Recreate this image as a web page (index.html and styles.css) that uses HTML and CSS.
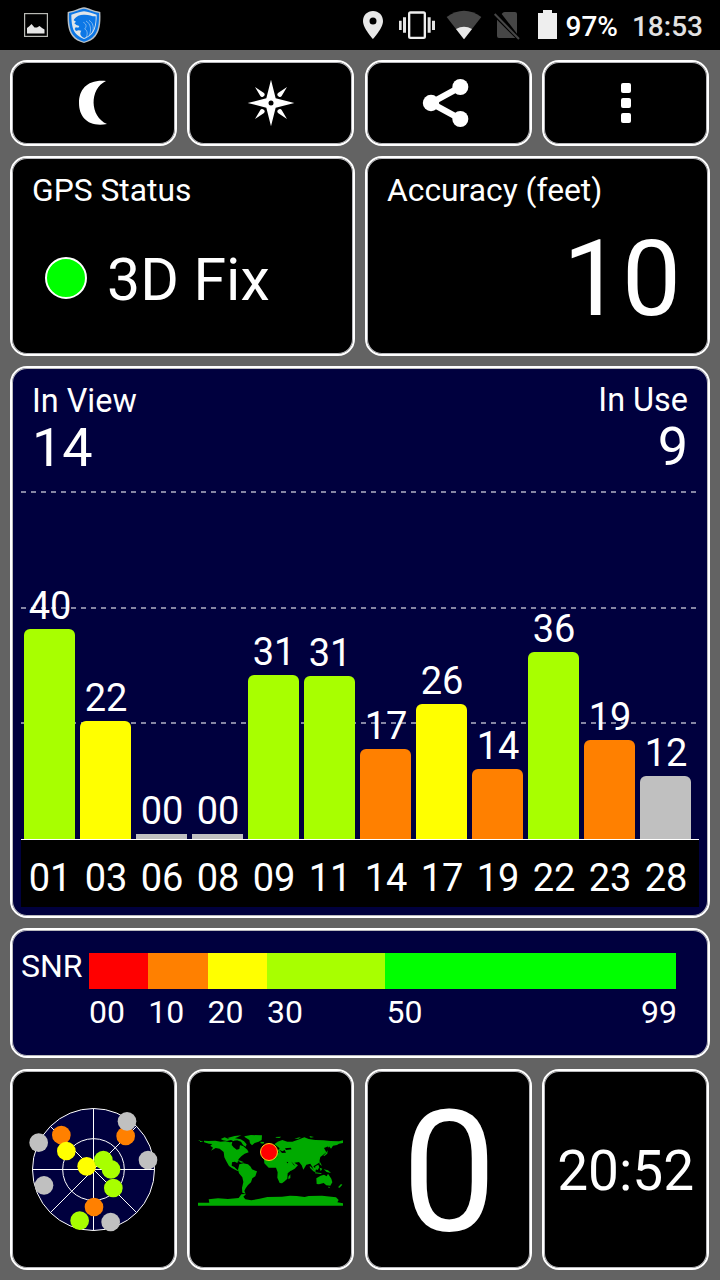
FILE: index.html
```html
<!DOCTYPE html>
<html lang="en">
<head>
  <meta charset="UTF-8" />
  <meta name="viewport" content="width=device-width, initial-scale=1.0"/>
  <title>GPS Status</title>
  <link rel="stylesheet" href="styles.css">
</head>
<body>
  <header class="statusbar">
    <svg class="notif" width="24" height="24" viewBox="0 0 24 24">
      <rect x=".6" y=".6" width="22.8" height="22.8" fill="none" stroke="#b9bab5" stroke-width="1.2"/>
      <path d="M3 20.500V15l2-1.500L7.500 11l3 3.500h2.500l2.500-1.500 2.500 2 2.500 1.500v4z" fill="#e6e6e6"/>
    </svg>
    <svg class="shield" width="34" height="36" viewBox="0 0 102 108">
      <path d="M51 1C37 2 27 11 2 15c-2 38 3 58 14 73 9 11 19 16 35 20 16-4 26-9 35-20 11-15 16-35 14-73C75 11 65 2 51 1z" fill="#b9c0c6"/>
      <path d="M51 5C38 7 27 14 6 18c-1 33 3 52 13 66 8 10 17 15 32 20 15-5 24-10 32-20 10-14 14-33 13-66C75 14 64 7 51 5z" fill="#0c77e6"/>
      <path d="M51 13C39 14 28 19 13 23c0 26 4 44 12 55 6 8 14 13 26 18 12-5 20-10 26-18 8-11 12-29 12-55C74 19 63 14 51 13z" fill="#dfe5ea"/>
      <path d="M22 36c6-9 17-13 28-13 16-1 26 6 36 5 1 22-4 39-12 49-6 7-12 12-22 16-12-5-15-13-9-22l-8-1-8 2-4-6 3-5 8 1 3-5-9-3-6-5 5-5-7-4z" fill="#0c77e6"/>
      <path d="M49 46c10 5 10 14 4 20 9 4 10 17 3 28M57 42c14 8 17 25 10 44M66 40c12 7 15 19 11 36" fill="none" stroke="#b4d4f5" stroke-width="2"/>
    </svg>

    <div class="indicators">
      <svg width="20" height="30" viewBox="42 30 60 90">
        <path d="M72 33c-17 0-30 13-30 30 0 22 30 54 30 54s30-32 30-54c0-17-13-30-30-30zm0 19.500a10.500 10.500 0 1 1 0 21 10.500 10.500 0 0 1 0-21z" fill="#e8e8e8"/>
      </svg>
      <svg class="vibrate" width="36" height="30" viewBox="150 30 108 90">
        <rect x="180.500" y="37.500" width="47" height="76" rx="4" fill="none" stroke="#eee" stroke-width="7"/>
        <path d="M150 62h8v28h-8zM162 52h9v46h-9zM236 52h9v46h-9zM249 62h9v28h-9z" fill="#e4e4e4"/>
      </svg>
      <svg class="wifi" width="36" height="30" viewBox="291 30 108 90">
        <path d="M293 51q52-37 104 0L345 118z" fill="#464646"/>
        <path d="M321 87q24-13 48 0L345 118z" fill="#e8e8e8"/>
      </svg>
      <svg class="sim" width="27" height="30" viewBox="432 30 81 90">
        <path d="M458 42q4-6 9-6h31q6 0 6 6v59zM444 59l55 55h-49q-6 0-6-6z" fill="#464646"/>
        <path d="M437 42l73 75" stroke="#464646" stroke-width="6"/>
      </svg>
      <svg class="battery" width="19" height="30" viewBox="567 30 57 90">
        <path d="M582 30h27v9h15v78h-57V39h15z" fill="#eee"/>
      </svg>
      <span class="percent">97%</span>
      <span class="clock">18:53</span>
    </div>
  </header>

  <main class="screen">
    <div class="row">
      <button class="panel tool" aria-label="Night mode">
        <svg width="161" height="80" viewBox="39 189 483 240">
          <path d="M318 243C262 238 237 268 237 309c0 43 28 73 84 63-52-22-54-105-3-129z" fill="#fff"/>
        </svg>
      </button>
      <button class="panel tool" aria-label="Compass">
        <svg width="161" height="80" viewBox="30 39 483 240">
          <path d="M273 89l14 56 56 14-56 14-14 56-14-56-56-14 56-14z" fill="#fff"/>
          <path d="M225 111l27 18q4 3 1 8l-4 3q-5 2-8-2zM321 111l-27 18q-4 3-1 8l4 3q5 2 8-2zM225 207l27-18q4-3 1-8l-4-3q-5-2-8 2zM321 207l-27-18q-4-3-1-8l4-3q5-2 8 2z" fill="#fff"/>
          <circle cx="273" cy="159" r="7.500" fill="#000"/>
        </svg>
      </button>
      <button class="panel tool" aria-label="Share">
        <svg width="161" height="80" viewBox="564 39 483 240">
          <path d="M841 111l-88 48 88 48" fill="none" stroke="#fff" stroke-width="19"/>
          <circle cx="841" cy="111" r="24" fill="#fff"/>
          <circle cx="753" cy="159" r="24.500" fill="#fff"/>
          <circle cx="841" cy="207" r="24" fill="#fff"/>
        </svg>
      </button>
      <button class="panel tool" aria-label="Menu">
        <span class="menu-dots"><i></i><i></i><i></i></span>
      </button>
    </div>

    <div class="row row-status">
      <section class="panel">
        <h2>GPS Status</h2>
        <div class="fix"><span class="led"></span>3D Fix</div>
      </section>
      <section class="panel">
        <h2>Accuracy (feet)</h2>
        <div class="accuracy">10</div>
      </section>
    </div>

    <section class="panel navy chart">
      <div class="counts">
        <div><h2>In View</h2><strong>14</strong></div>
        <div class="in-use"><h2>In Use</h2><strong>9</strong></div>
      </div>
      <div class="plot">
        <div class="sat"><span>40</span><div class="bar lime" style="height:210px"></div></div>
        <div class="sat"><span>22</span><div class="bar yellow" style="height:118px"></div></div>
        <div class="sat"><span>00</span><div class="bar gray flat" style="height:5px"></div></div>
        <div class="sat"><span>00</span><div class="bar gray flat" style="height:5px"></div></div>
        <div class="sat"><span>31</span><div class="bar lime" style="height:164px"></div></div>
        <div class="sat"><span>31</span><div class="bar lime" style="height:163px"></div></div>
        <div class="sat"><span>17</span><div class="bar orange" style="height:90px"></div></div>
        <div class="sat"><span>26</span><div class="bar yellow" style="height:135px"></div></div>
        <div class="sat"><span>14</span><div class="bar orange" style="height:70px"></div></div>
        <div class="sat"><span>36</span><div class="bar lime" style="height:187px"></div></div>
        <div class="sat"><span>19</span><div class="bar orange" style="height:99px"></div></div>
        <div class="sat"><span>12</span><div class="bar gray" style="height:63px"></div></div>
      </div>
      <div class="ids">
        <span>01</span><span>03</span><span>06</span><span>08</span><span>09</span><span>11</span>
        <span>14</span><span>17</span><span>19</span><span>22</span><span>23</span><span>28</span>
      </div>
    </section>

    <section class="panel navy snr">
      <span class="snr-title">SNR</span>
      <div class="scale">
        <div class="w10"><div class="swatch red"></div>00</div>
        <div class="w10"><div class="swatch orange"></div>10</div>
        <div class="w10"><div class="swatch yellow"></div>20</div>
        <div class="w20"><div class="swatch lime"></div>30</div>
        <div class="w49"><div class="swatch green"></div><div class="ends"><span>50</span><span>99</span></div></div>
      </div>
    </section>

    <div class="row row-bottom">
      <section class="panel">
        <svg width="161" height="195" viewBox="39 21 483 585">
          <g fill="#00003e" stroke="#fff" stroke-width="3">
            <circle cx="280.500" cy="313.500" r="183"/>
            <circle cx="280.500" cy="313.500" r="92.500" fill="none"/>
            <path d="M280.500 130v367M97 313.500h367M151 184l259 259M410 184L151 443" fill="none"/>
          </g>
          <g fill="#ff8000">
            <circle cx="377" cy="213" r="28"/>
            <circle cx="184" cy="210" r="28"/>
            <circle cx="282" cy="426" r="28"/>
          </g>
          <g fill="#c0c0c0">
            <circle cx="381" cy="169" r="28"/>
            <circle cx="116" cy="233" r="28"/>
            <circle cx="444" cy="285" r="28"/>
            <circle cx="132" cy="361" r="28"/>
            <circle cx="332" cy="471" r="28"/>
          </g>
          <g fill="#ff0">
            <circle cx="199" cy="258" r="28"/>
            <circle cx="260" cy="304" r="28"/>
          </g>
          <g fill="#a8ff00">
            <circle cx="310" cy="285" r="28"/>
            <circle cx="333" cy="313" r="28"/>
            <circle cx="340" cy="369" r="28"/>
            <circle cx="239" cy="467" r="28"/>
          </g>
        </svg>
      </section>
      <section class="panel">
        <svg width="161" height="195" viewBox="0 -144 483 585">
          <g fill="#00aa00">
            <!-- americas -->
            <path d="M24 60h6v6h12v-4l14 1 20-1 16 3 14-1 14 3 10-2 6 8-6 8 10 8 8-2 2-12 10 4 12 10 4 8-12 4-10 8-8 8-4 12-8-4-8 2-1 10 8 4 6 6 8 6-6-1-14-7-10-7-8-14-6-12-2-16-12-10-12-2-14 8 6-9-8-6 6-5-10-1-10-3z"/>
            <path d="M148 133l12-3 14 3 8 7 4 8 15 6-5 15-9 6-4 12-9 8-7 10-4 8 4 8-10-3-1-14 4-18-3-14-10-12-3-11z"/>
            <path d="M92 57l12-5 10 4 8-3 14 2 16 3 10 6 8 9-3 7-8-5-6-10-12-4-10 3-8-4-12 3-12-2zM112 54l22-6 20-2-12 6-12 4z"/>
            <path d="M163 49l20-4 33 1-1 14-9 5-12 4-8 7-6-6-2-10-13-8zM211 65l12 1-3 5-8-1z"/>
            <path d="M138 120l13 2 11 5-9 1-6-4-10-2z"/>
            <!-- europe and asia -->
            <path d="M253 73l10-8 14-5 15 5 15 0 17-6 19-7 13 5 20 3 25 1 20 2 26 1 12-3v8l-12 2-6 4-12 2-6 9-6-8-15 6 7 13-10 8-8 6-4 17-9 6-8 5 8 9-3 9-8-16-6-10-12 3-9 15-5-13-8-10-14 2 11 8-10 10-12 7-12-19 5-8-15-1-2-9-11 3-4-9-12 6 1-9 8-6 8-5-7-2 8-9-5-4zM256 51l18-1-6 4-9-1zM313 57l10-4 10-2-7 5zM358 48l14 3-10 2z"/>
            <!-- africa -->
            <path d="M227 109l29-3 7 6 23 2 5 14 8 8 10 1-7 15-9 8-1 16-8 8-8 6-7-1-7-16 1-16-5-14-22 0-13-13-1-12zM301 163l-6 7v8l6-4z"/>
            <!-- oceania -->
            <path d="M379 175l13-8 10-3 8 5 4-8 10 15 3 11-6 10-12-1-8-7-14 4-7-1zM453 192l4 2-8 9-5-1zM414 200l6 1-3 4zM359 137l13 12 6 8-8-3-10-11zM376 139l9-5 3 8-5 8-8-3zM376 157l20 3-4 2-17-2zM389 143l8 3-5 8zM401 148l13 3 9 8-13-3zM387 121l5 9 4 8-7-5zM400 107l7-7 6-9-1 10-9 7zM413 82l5-9 3-4-3 13z"/>
            <!-- antarctica -->
            <path d="M24 248h34l-2-10 28-3 30 2 32-3 8-11 14-1-8 8 6 8 18 3 25-5 23-5 44-1 24-3 20 1 24 3 12-3 40-1 42 5 8 8-4 7 17 3v7H24z"/>
          </g>
          <path d="M127 65l9-4 4 13-9 8-6-7zM263 87l14 7 7-4 4 8-12 1-7-8zM285 85l17-2 3 5-17 2zM303 124l8 11 5 3M146 69l12 5-6 2z" fill="#000"/>
          <circle cx="237" cy="96" r="25.500" fill="#f00" stroke="#ffd21a" stroke-width="3"/>
        </svg>
      </section>
      <section class="panel speed">0</section>
      <section class="panel time">20:52</section>
    </div>
  </main>
</body>
</html>
```

FILE: styles.css
```css
* {
  box-sizing: border-box;
}

body {
  margin: 0;
  width: 720px;
  height: 1280px;
  overflow: hidden;
  background: #636363;
  color: #fff;
  font-family: Roboto, sans-serif;
}

svg {
  display: block;
}

.statusbar {
  display: flex;
  align-items: center;
  height: 50px;
  padding: 0 17px 0 24px;
  background: #000;
}

.shield {
  margin-left: 19px;
}

.indicators {
  display: flex;
  align-items: center;
  margin-left: auto;
  font-size: 28px;
  font-weight: 500;
  line-height: 28px;
}

.vibrate { margin-left: 16px; }
.wifi { margin-left: 11px; }
.sim { margin-left: 11px; }
.battery { margin-left: 18px; }

.percent {
  padding: 3px 0 0;
  margin-left: 9px;
}

.clock {
  padding: 3px 0 0;
  margin-left: 14px;
  color: #e2e2e2;
}

.screen {
  display: flex;
  flex-direction: column;
  gap: 10px;
  padding: 10px;
}

.row {
  display: grid;
  grid-template-columns: repeat(4, 167px);
  gap: 10.4px;
  height: 86px;
}

.row-status {
  grid-template-columns: 345px 345px;
  gap: 10px;
  height: 200px;
}

.row-bottom {
  height: 201px;
  margin-top: 1px;
}

.panel {
  margin: 0;
  padding: 1px;
  border: 2px solid #fff;
  border-radius: 17px;
  background: #000;
  box-shadow: inset 0 0 0 1px #b9b9bd;
  color: #fff;
}

.navy {
  background: #00003e;
}

.tool {
  display: flex;
  align-items: center;
  justify-content: center;
}

.menu-dots {
  display: flex;
  flex-direction: column;
  gap: 5px;
}

.menu-dots i {
  width: 10px;
  height: 10px;
  border-radius: 2px;
  background: #fff;
}

h2 {
  margin: 0;
  font-size: 32px;
  font-weight: 400;
  line-height: 32px;
}

.row-status .panel {
  padding: 16px 27px 0 20px;
}

.row-status h2 {
  font-size: 31.8px;
}

.fix {
  display: flex;
  align-items: center;
  margin-top: 44px;
  padding-left: 13px;
  font-size: 59px;
  line-height: 59px;
}

.led {
  width: 42px;
  height: 42px;
  margin: -4px 20px 0 0;
  border: 2px solid #fff;
  border-radius: 50%;
  background: #0f0;
}

.accuracy {
  margin-top: 21px;
  font-size: 105px;
  line-height: 106px;
  text-align: right;
}

.chart {
  height: 552px;
}

.counts {
  display: flex;
  justify-content: space-between;
  height: 122px;
  padding: 16px 19px 0;
}

.counts h2 {
  font-size: 32.4px;
}

.counts strong {
  display: block;
  margin-top: 4px;
  font-size: 54px;
  font-weight: 400;
  line-height: 54px;
}

.in-use {
  margin-top: -1px;
  text-align: right;
}

.plot {
  display: flex;
  align-items: flex-end;
  gap: 5px;
  height: 348px;
  margin: 0 8px;
  padding-left: 3px;
  background-image:
    repeating-linear-gradient(90deg, #8585a3 0 5px, transparent 5px 10px),
    repeating-linear-gradient(90deg, #8585a3 0 5px, transparent 5px 10px),
    repeating-linear-gradient(90deg, #8585a3 0 5px, transparent 5px 10px);
  background-size: 676px 2px;
  background-position: 0 0, 0 116px, 0 231px;
  background-repeat: no-repeat;
}

.sat {
  width: 51px;
  font-size: 38px;
  line-height: 38px;
  text-align: center;
}

.sat span {
  display: block;
  margin-bottom: 4px;
  padding-left: 1px;
}

.bar {
  border-radius: 6px 6px 0 0;
}

.flat {
  border-radius: 0;
}

.lime { background: #a8ff00; }
.yellow { background: #ff0; }
.orange { background: #ff8000; }
.red { background: #f00; }
.green { background: #0f0; }
.gray { background: #c0c0c0; }

.ids {
  display: flex;
  gap: 5px;
  height: 68px;
  margin: 0 8px;
  padding: 19px 0 0 3px;
  border-top: 1px solid #fff;
  background: #000;
  font-size: 38px;
  line-height: 38px;
}

.ids span {
  width: 51px;
  padding-left: 1px;
  text-align: center;
}

.snr {
  display: flex;
  height: 130px;
  padding: 23px 32px 0 9px;
  font-size: 32px;
  line-height: 32px;
}

.snr-title {
  width: 68px;
  margin-top: -3px;
}

.scale {
  display: flex;
  flex: 1;
}

.w10 { flex: 10 1 0; }
.w20 { flex: 20 1 0; }
.w49 { flex: 49 1 0; }

.swatch {
  height: 36px;
  margin-bottom: 7px;
}

.ends {
  display: flex;
  justify-content: space-between;
  margin: 0 -1px 0 1px;
}

.speed {
  padding-top: 16px;
  padding-left: 3px;
  font-size: 169px;
  line-height: 170px;
  text-align: center;
}

.time {
  padding-top: 73px;
  font-size: 55px;
  line-height: 54px;
  text-align: center;
}
```
